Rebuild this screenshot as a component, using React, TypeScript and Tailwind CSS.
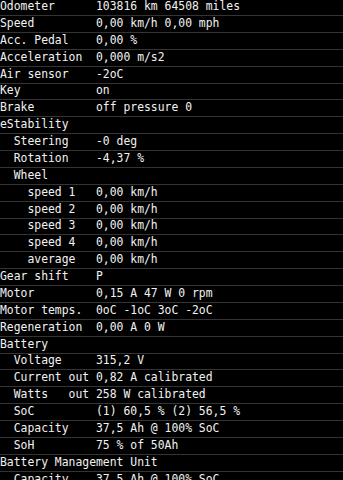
import React from "react";

const rows: string[] = [
  "Odometer      103816 km 64508 miles",
  "Speed         0,00 km/h 0,00 mph",
  "Acc. Pedal    0,00 %",
  "Acceleration  0,000 m/s2",
  "Air sensor    -2oC",
  "Key           on",
  "Brake         off pressure 0",
  "eStability",
  "  Steering    -0 deg",
  "  Rotation    -4,37 %",
  "  Wheel",
  "    speed 1   0,00 km/h",
  "    speed 2   0,00 km/h",
  "    speed 3   0,00 km/h",
  "    speed 4   0,00 km/h",
  "    average   0,00 km/h",
  "Gear shift    P",
  "Motor         0,15 A 47 W 0 rpm",
  "Motor temps.  0oC -1oC 3oC -2oC",
  "Regeneration  0,00 A 0 W",
  "Battery",
  "  Voltage     315,2 V",
  "  Current out 0,82 A calibrated",
  "  Watts   out 258 W calibrated",
  "  SoC         (1) 60,5 % (2) 56,5 %",
  "  Capacity    37,5 Ah @ 100% SoC",
  "  SoH         75 % of 50Ah",
  "Battery Management Unit",
  "  Capacity    37,5 Ah @ 100% SoC",
];

export default function App() {
  return (
    <div
      className="w-[343px] h-[480px] overflow-hidden bg-black text-[#f2f2f2] text-[11.4px]"
      style={{ fontFamily: '"DejaVu Sans Mono", monospace' }}
    >
      {rows.map((r, i) => (
        <div key={i} className="flex flex-col h-[16.88px]">
          <div className="h-[15px] leading-[13px] whitespace-pre">{r}</div>
          <div className="h-px bg-[#343434]" />
        </div>
      ))}
    </div>
  );
}
